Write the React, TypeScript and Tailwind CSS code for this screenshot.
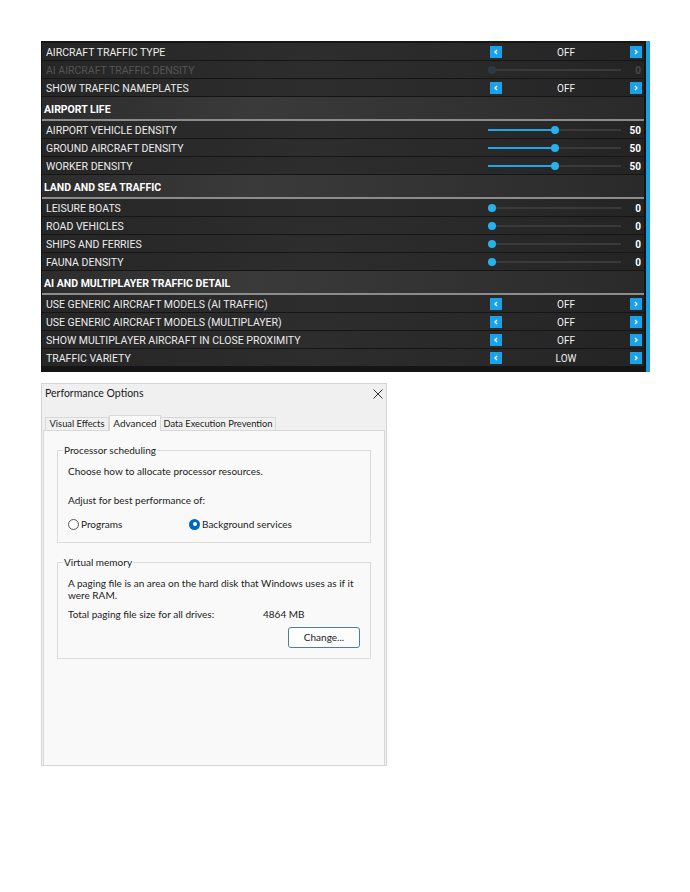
import React from 'react';

type Row = {
  label: string;
  kind: 'toggle' | 'slider';
  value: string;
  pct?: number;
  disabled?: boolean;
};

type Section = {
  title?: string;
  rows: Row[];
};

const sections: Section[] = [
  {
    rows: [
      { label: 'AIRCRAFT TRAFFIC TYPE', kind: 'toggle', value: 'OFF' },
      { label: 'AI AIRCRAFT TRAFFIC DENSITY', kind: 'slider', value: '0', pct: 0, disabled: true },
      { label: 'SHOW TRAFFIC NAMEPLATES', kind: 'toggle', value: 'OFF' },
    ],
  },
  {
    title: 'AIRPORT LIFE',
    rows: [
      { label: 'AIRPORT VEHICLE DENSITY', kind: 'slider', value: '50', pct: 50 },
      { label: 'GROUND AIRCRAFT DENSITY', kind: 'slider', value: '50', pct: 50 },
      { label: 'WORKER DENSITY', kind: 'slider', value: '50', pct: 50 },
    ],
  },
  {
    title: 'LAND AND SEA TRAFFIC',
    rows: [
      { label: 'LEISURE BOATS', kind: 'slider', value: '0', pct: 0 },
      { label: 'ROAD VEHICLES', kind: 'slider', value: '0', pct: 0 },
      { label: 'SHIPS AND FERRIES', kind: 'slider', value: '0', pct: 0 },
      { label: 'FAUNA DENSITY', kind: 'slider', value: '0', pct: 0 },
    ],
  },
  {
    title: 'AI AND MULTIPLAYER TRAFFIC DETAIL',
    rows: [
      { label: 'USE GENERIC AIRCRAFT MODELS (AI TRAFFIC)', kind: 'toggle', value: 'OFF' },
      { label: 'USE GENERIC AIRCRAFT MODELS (MULTIPLAYER)', kind: 'toggle', value: 'OFF' },
      { label: 'SHOW MULTIPLAYER AIRCRAFT IN CLOSE PROXIMITY', kind: 'toggle', value: 'OFF' },
      { label: 'TRAFFIC VARIETY', kind: 'toggle', value: 'LOW' },
    ],
  },
];

const ArrowButton: React.FC<{ dir: 'left' | 'right' }> = ({ dir }) => (
  <div className="w-[12px] h-[12px] bg-[#1aa2e8] flex items-center justify-center">
    <svg width="6" height="6" viewBox="0 0 6 6" fill="none">
      {dir === 'left' ? (
        <path d="M4 1L2 3l2 2" stroke="#ffffff" strokeWidth="1.3" />
      ) : (
        <path d="M2 1l2 2-2 2" stroke="#ffffff" strokeWidth="1.3" />
      )}
    </svg>
  </div>
);

const SettingRow: React.FC<{ row: Row }> = ({ row }) => {
  const pct = row.pct ?? 0;
  return (
    <div className="h-[17px] mb-[1px] flex items-center bg-[linear-gradient(90deg,#262626,#2d2d2d_45%,#292929_75%,#242424)]">
      <span
        className={`flex-1 pl-[4px] pt-[3px] text-[10.5px] leading-none ${row.disabled ? 'text-[#555555]' : 'text-[#ececec]'}`}
      >
        {row.label}
      </span>
      {row.kind === 'toggle' ? (
        <div className="w-[152px] mr-[2px] flex items-center justify-between pt-[1px]">
          <ArrowButton dir="left" />
          <span className="text-[10px] leading-none pt-[1px] text-[#f2f2f2]">{row.value}</span>
          <ArrowButton dir="right" />
        </div>
      ) : (
        <div className="w-[153px] mr-[3px] flex items-center pt-[1px]">
          <div className="relative w-[133px] h-[10px] flex items-center">
            <div className="w-full h-[2px] bg-[#3a3a3a]" />
            {!row.disabled && (
              <div className="absolute left-0 h-[2px] bg-[#1ea6e6]" style={{ width: `${4 + pct * 1.26}px` }} />
            )}
            <div
              className={`absolute w-[8px] h-[8px] rounded-full ${row.disabled ? 'bg-[#2f3a40]' : 'bg-[#27b0ec]'}`}
              style={{ left: `${pct * 1.26}px` }}
            />
          </div>
          <span
            className={`flex-1 text-right text-[10px] leading-none pt-[1px] font-bold ${row.disabled ? 'text-[#4a4a4a]' : 'text-white'}`}
          >
            {row.value}
          </span>
        </div>
      )}
    </div>
  );
};

const TrafficPanel: React.FC = () => (
  <div className="w-[609px] h-[331px] bg-[#151515] flex font-['Roboto',sans-serif]">
    <div className="flex-1 flex flex-col pt-[2px] pl-[1px]">
      {sections.map((section, i) => (
        <div key={i}>
          {section.title && (
            <>
              <div className="h-[22px] flex items-center pl-[2px] pt-[4px] bg-[linear-gradient(90deg,#2c2c2c,#3a3a3a_35%,#333333_65%,#2a2a2a)]">
                <span className="text-[10.5px] font-bold text-white leading-none">{section.title}</span>
              </div>
              <div className="h-[2px] bg-[#8c8c8c]" />
            </>
          )}
          {section.rows.map((row) => (
            <SettingRow key={row.label} row={row} />
          ))}
        </div>
      ))}
    </div>
    <div className="w-[4px] ml-[2px] bg-[#1a9ee4]" />
  </div>
);

const Radio: React.FC<{ checked?: boolean; label: string }> = ({ checked, label }) => (
  <div className="flex items-center gap-[2px]">
    {checked ? (
      <div className="w-[11px] h-[11px] rounded-full bg-[#0067c0] flex items-center justify-center">
        <div className="w-[4px] h-[4px] rounded-full bg-white" />
      </div>
    ) : (
      <div className="w-[11px] h-[11px] rounded-full border border-[#555555] bg-white" />
    )}
    <span>{label}</span>
  </div>
);

const PerformanceDialog: React.FC = () => (
  <div className="mt-[11px] w-[346px] h-[383px] bg-[#f0f0f0] border border-[#d4d4d4] flex flex-col font-['Lato',sans-serif] text-[10px] text-[#1b1b1b]">
    <div className="h-[19px] flex items-center justify-between pl-[3px] pr-[3px]">
      <span className="text-[10.5px]">Performance Options</span>
      <svg width="10" height="10" viewBox="0 0 10 10">
        <path d="M0.5 0.5l9 9M9.5 0.5l-9 9" stroke="#333333" strokeWidth="1" />
      </svg>
    </div>
    <div className="h-[11px]" />
    <div className="flex items-end h-[16px] pl-[3px]">
      <div className="w-[64px] h-[13px] flex items-center justify-center border border-b-0 border-[#d8d8d8] bg-[#f0f0f0] text-[9.3px]">
        Visual Effects
      </div>
      <div className="w-[52px] h-[16px] flex items-center justify-center border border-b-0 border-[#d8d8d8] bg-[#f9f9f9] -mb-[1px] relative">
        Advanced
      </div>
      <div className="w-[115px] h-[13px] flex items-center justify-center border border-b-0 border-l-0 border-[#d8d8d8] bg-[#f0f0f0] text-[9.3px]">
        Data Execution Prevention
      </div>
    </div>
    <div className="flex-1 mx-[1px] border border-b-0 border-[#d8d8d8] bg-[#f9f9f9] px-[13px] pt-[12px]">
      <fieldset className="border border-[#dcdcdc] h-[100px] px-[10px]">
        <legend className="-ml-[5px] px-[1px]">Processor scheduling</legend>
        <div className="mt-[6px] leading-[14px]">Choose how to allocate processor resources.</div>
        <div className="mt-[15px] leading-[14px]">Adjust for best performance of:</div>
        <div className="mt-[10px] leading-[14px] flex">
          <div className="w-[121px]">
            <Radio label="Programs" />
          </div>
          <Radio checked label="Background services" />
        </div>
      </fieldset>
      <fieldset className="mt-[12px] border border-[#dcdcdc] h-[104px] px-[10px]">
        <legend className="-ml-[5px] px-[1px]">Virtual memory</legend>
        <div className="mt-[7px] leading-[12px]">
          A paging file is an area on the hard disk that Windows uses as if it
          <br />
          were RAM.
        </div>
        <div className="mt-[6px] leading-[14px] flex">
          <span className="w-[195px]">Total paging file size for all drives:</span>
          <span>4864 MB</span>
        </div>
        <div className="mt-[6px] flex justify-end">
          <div className="w-[72px] h-[21px] rounded-[3px] border border-[#4d7f90] bg-[#fdfdfd] flex items-center justify-center">
            Change...
          </div>
        </div>
      </fieldset>
    </div>
  </div>
);

export default function App() {
  return (
    <div className="min-h-screen bg-white pt-[41px] pl-[41px]">
      <TrafficPanel />
      <PerformanceDialog />
    </div>
  );
}
